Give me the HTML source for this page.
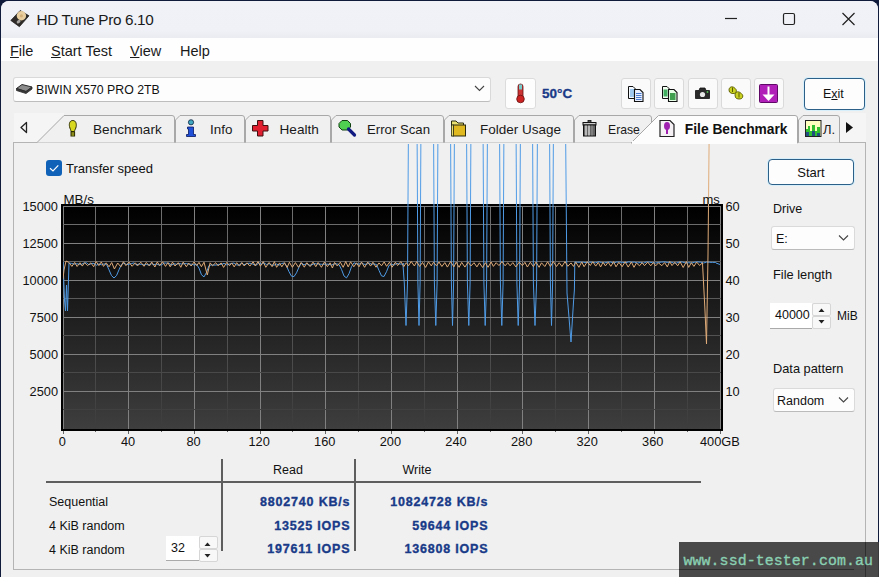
<!DOCTYPE html><html><head><meta charset="utf-8"><style>
html,body{margin:0;padding:0;width:879px;height:577px;overflow:hidden;background:#101a3a;}
.t{position:absolute;white-space:nowrap;font-family:"Liberation Sans",sans-serif;}
.b{position:absolute;box-sizing:border-box;}
svg{position:absolute;left:0;top:0;}
</style></head><body>
<div class="b" style="left:1px;top:1px;width:877px;height:600px;background:#f0f0f0;border-radius:8px 8px 0 0;overflow:hidden;"></div><div class="b" style="left:1px;top:1px;width:877px;height:37px;background:linear-gradient(#f0f2f8 0px,#f0f1f7 30px,#ebecf1 36px);border-radius:8px 8px 0 0;"></div><div class="b" style="left:1px;top:37.5px;width:877px;height:23.5px;background:#fefefe;"></div><div class="t" style="left:36.5px;top:12.05px;font-size:15.3px;line-height:15.3px;color:#1a1a1a;font-weight:400;font-family:Liberation Sans, sans-serif;letter-spacing:-0.35px;">HD Tune Pro 6.10</div><div class="t" style="left:10px;top:43.73px;font-size:14.5px;line-height:14.5px;color:#1a1a1a;font-weight:400;font-family:Liberation Sans, sans-serif;"><u>F</u>ile</div><div class="t" style="left:51px;top:43.73px;font-size:14.5px;line-height:14.5px;color:#1a1a1a;font-weight:400;font-family:Liberation Sans, sans-serif;"><u>S</u>tart Test</div><div class="t" style="left:130px;top:43.73px;font-size:14.5px;line-height:14.5px;color:#1a1a1a;font-weight:400;font-family:Liberation Sans, sans-serif;"><u>V</u>iew</div><div class="t" style="left:180px;top:43.73px;font-size:14.5px;line-height:14.5px;color:#1a1a1a;font-weight:400;font-family:Liberation Sans, sans-serif;">Help</div><svg width="879" height="40" style="left:0;top:0">
<line x1="725" y1="18.5" x2="737" y2="18.5" stroke="#222" stroke-width="1.2"/>
<rect x="783.5" y="13.5" width="11" height="11" rx="1.5" fill="none" stroke="#222" stroke-width="1.2"/>
<path d="M842.5 13 L854.5 25 M854.5 13 L842.5 25" stroke="#222" stroke-width="1.2"/>
</svg><div class="b" style="left:13px;top:77px;width:478px;height:25px;background:#fdfdfd;border:1px solid #d9d9d9;border-bottom-color:#bdbdbd;border-radius:3px;"></div><div class="t" style="left:36px;top:83.59px;font-size:12.3px;line-height:12.3px;color:#111;font-weight:400;font-family:Liberation Sans, sans-serif;">BIWIN X570 PRO 2TB</div><svg width="879" height="120" style="left:0;top:0">
<path d="M16.5 88.5 L22 84.5 L32 87 L26 91.5 Z" fill="#8a8a8a" stroke="#2a2a2a" stroke-width="1"/>
<path d="M16.5 88.5 V90.5 L26 93.5 L32 89 V87 L26 91.5 Z" fill="#3a3a3a" stroke="#2a2a2a" stroke-width="0.8"/>
<path d="M475 86 L479.5 90.5 L484 86" fill="none" stroke="#444" stroke-width="1.1"/>
</svg><div class="b" style="left:505px;top:78px;width:31px;height:31px;background:#fdfdfd;border:1px solid #dcdcdc;border-radius:3px;"></div><svg width="879" height="120" style="left:0;top:0">
<rect x="518" y="84" width="5" height="14" rx="2.5" fill="#c33" stroke="#611" stroke-width="0.8"/>
<rect x="519" y="84.5" width="3" height="5" fill="#7cc"/>
<circle cx="520.5" cy="99" r="3.8" fill="#c22" stroke="#611" stroke-width="0.8"/>
</svg><div class="t" style="left:542px;top:87.07px;font-size:13.5px;line-height:13.5px;color:#1a3a88;font-weight:700;font-family:Liberation Sans, sans-serif;-webkit-text-stroke:0.3px #1a3a88;">50°C</div><div class="b" style="left:621px;top:78px;width:30px;height:31px;background:#fafafa;border:1px solid #dadada;border-radius:3px;"></div><div class="b" style="left:654px;top:78px;width:30px;height:31px;background:#fafafa;border:1px solid #dadada;border-radius:3px;"></div><div class="b" style="left:688px;top:78px;width:30px;height:31px;background:#fafafa;border:1px solid #dadada;border-radius:3px;"></div><div class="b" style="left:721px;top:78px;width:30px;height:31px;background:#fafafa;border:1px solid #dadada;border-radius:3px;"></div><div class="b" style="left:754px;top:78px;width:30px;height:31px;background:#fafafa;border:1px solid #dadada;border-radius:3px;"></div><svg width="879" height="120" style="left:0;top:0">
<path d="M628.5 86.5 H633 L635.5 89 V98.5 H628.5 Z" fill="#f4f8ff" stroke="#111" stroke-width="1"/>
<path d="M630 90h4M630 92h4M630 94h4M630 96h4" stroke="#4a9ae0" stroke-width="1"/>
<path d="M634.5 89.5 H640 L643 92.5 V101.5 H634.5 Z" fill="#e8f0ff" stroke="#111" stroke-width="1.1"/>
<path d="M636 93.5h5.5M636 95.5h5.5M636 97.5h5.5M636 99.5h5.5" stroke="#4a7ad0" stroke-width="1"/>
<path d="M662.5 86.5 H667 L669.5 89 V98.5 H662.5 Z" fill="#f4fff4" stroke="#111" stroke-width="1"/>
<rect x="663.5" y="89.5" width="4" height="7" fill="#40b060"/>
<path d="M668.5 89.5 H674 L677 92.5 V101.5 H668.5 Z" fill="#e8ffe8" stroke="#111" stroke-width="1.1"/>
<rect x="670" y="93" width="5.5" height="7" fill="#40a050"/>
<path d="M695.5 90.5 H699 L700 88 H705 L706 90.5 H709.5 V98.5 H695.5 Z" fill="#2a2a2a" stroke="#111" stroke-width="0.8"/>
<circle cx="702.5" cy="94.5" r="2.6" fill="#e8e8e8"/>
<circle cx="707.5" cy="92" r="0.9" fill="#50c050"/>
<path d="M729 90 C729 87 732 86 734 87.5 C736 89 737 90 736 92.5 C735 94 731 94 729.5 92 Z" fill="#c8d020" stroke="#5a5a00" stroke-width="0.9"/>
<path d="M735 95 C735 92 738 91 740 92.5 C742 94 743.5 95 742.5 97.5 C741.5 99.5 737 99.5 735.5 97.5 Z" fill="#c8d020" stroke="#5a5a00" stroke-width="0.9"/>
<path d="M732.5 87.5 V92 M739 92.5 V97.5" stroke="#5a5a00" stroke-width="1"/>
<rect x="759.5" y="84.5" width="18" height="18" rx="1" fill="#b020b8" stroke="#600868" stroke-width="1"/>
<path d="M768.5 86.5 V99" stroke="#fff" stroke-width="2"/>
<path d="M762.5 94.5 H774.5 L768.5 101 Z" fill="#fff"/>
</svg><div class="b" style="left:804px;top:78px;width:61px;height:32px;background:#fdfdfd;border:1px solid #2d6088;border-radius:4px;box-shadow:0 0 0 1px #d6effb;"></div><div class="t" style="left:823px;top:87.92px;font-size:12.5px;line-height:12.5px;color:#111;font-weight:400;font-family:Liberation Sans, sans-serif;">E<u>x</u>it</div><div class="b" style="left:13px;top:142px;width:853px;height:428px;background:#f0f0f0;border:1px solid #b4b4b4;"></div><svg width="879" height="150" style="left:0;top:0"><rect x="14" y="113" width="50" height="29" fill="#f5f5f5"/><rect x="840" y="113" width="26" height="29" fill="#f5f5f5"/><path d="M26.5 122.5 L21 127.5 L26.5 132.5 Z" fill="none" stroke="#222" stroke-width="1.3" stroke-linejoin="round"/><path d="M846 122 L853 127.5 L846 133 Z" fill="#111"/><path d="M37 142.5 L64 115.5 H172 Q174.5 115.5 174.5 118 V142.5" fill="#f0f0f0" stroke="#a8a8a8" stroke-width="1"/><path d="M175.5 142.5 V120 L180 115.5 H242 Q244.5 115.5 244.5 118 V142.5" fill="#f0f0f0" stroke="#a8a8a8" stroke-width="1"/><path d="M245.5 142.5 V120 L250 115.5 H328 Q330.5 115.5 330.5 118 V142.5" fill="#f0f0f0" stroke="#a8a8a8" stroke-width="1"/><path d="M331.5 142.5 V120 L336 115.5 H441 Q443.5 115.5 443.5 118 V142.5" fill="#f0f0f0" stroke="#a8a8a8" stroke-width="1"/><path d="M444.5 142.5 V120 L449 115.5 H571 Q573.5 115.5 573.5 118 V142.5" fill="#f0f0f0" stroke="#a8a8a8" stroke-width="1"/><path d="M574.5 142.5 V120 L579 115.5 H649 Q651.5 115.5 651.5 118 V142.5" fill="#f0f0f0" stroke="#a8a8a8" stroke-width="1"/><path d="M798.5 142.5 V120 L803 115.5 H837 Q839.5 115.5 839.5 118 V142.5" fill="#f0f0f0" stroke="#a8a8a8" stroke-width="1"/><path d="M631 143 L658.5 115.5 H795 Q797.5 115.5 797.5 118 V143 Z" fill="#fdfdfd" stroke="#a8a8a8" stroke-width="1"/><rect x="632" y="141" width="165" height="3" fill="#fdfdfd"/></svg><div class="t" style="left:93px;top:122.99px;font-size:13.6px;line-height:13.6px;color:#1a1a1a;font-weight:400;font-family:Liberation Sans, sans-serif;">Benchmark</div><div class="t" style="left:210px;top:123.16px;font-size:13.4px;line-height:13.4px;color:#1a1a1a;font-weight:400;font-family:Liberation Sans, sans-serif;">Info</div><div class="t" style="left:279.5px;top:122.99px;font-size:13.6px;line-height:13.6px;color:#1a1a1a;font-weight:400;font-family:Liberation Sans, sans-serif;">Health</div><div class="t" style="left:367px;top:123.33px;font-size:13.2px;line-height:13.2px;color:#1a1a1a;font-weight:400;font-family:Liberation Sans, sans-serif;">Error Scan</div><div class="t" style="left:480px;top:123.07px;font-size:13.5px;line-height:13.5px;color:#1a1a1a;font-weight:400;font-family:Liberation Sans, sans-serif;">Folder Usage</div><div class="t" style="left:608px;top:124.17px;font-size:12.2px;line-height:12.2px;color:#1a1a1a;font-weight:400;font-family:Liberation Sans, sans-serif;">Erase</div><div class="t" style="left:823px;top:123.00px;font-size:13px;line-height:13px;color:#1a1a1a;font-weight:400;font-family:Liberation Sans, sans-serif;">Л.</div><div class="t" style="left:684.8px;top:122.92px;font-size:13.8px;line-height:13.8px;color:#111;font-weight:700;font-family:Liberation Sans, sans-serif;">File Benchmark</div><svg width="879" height="150" style="left:0;top:0">
<path d="M72.8 120.5 C69.5 120.5 69 124 69.5 126.5 C70 129 71 130 71 131.5 H74.5 C74.5 130 75.8 129 76.2 126.5 C76.6 124 76 120.5 72.8 120.5 Z" fill="#d8d820" stroke="#2a2a00" stroke-width="1"/>
<rect x="71" y="132" width="3.6" height="4" fill="#d0d030" stroke="#2a2a00" stroke-width="1"/>
<path d="M71 134 H74.6" stroke="#2a2a00" stroke-width="0.8"/>
<circle cx="191" cy="122.3" r="2.6" fill="#40a8c0" stroke="#0a2040" stroke-width="0.8"/>
<path d="M187.5 127 H193.5 V134.5 H195.5 V136.5 H186.5 V134.5 H188.5 V129 H187.5 Z" fill="#2050d8" stroke="#081860" stroke-width="0.8"/>
<path d="M257.5 120.5 H263 V125.5 H268 V131 H263 V136 H257.5 V131 H252.5 V125.5 H257.5 Z" fill="#e02030" stroke="#401010" stroke-width="1"/>
<path d="M342 120.5 H347.5 L350.5 123.5 V127 L347.5 130 H342 L339 127 V123.5 Z" fill="#50d050" stroke="#104010" stroke-width="1"/>
<path d="M348.5 129 L354.5 135" stroke="#101a80" stroke-width="3.2" stroke-linecap="round"/>
<path d="M451.5 121 H456 L458 123 H463.5 V126 H451.5 Z" fill="#e8e070" stroke="#2a2a10" stroke-width="1"/>
<rect x="453" y="125" width="12.5" height="11" fill="#e0b820" stroke="#2a2a10" stroke-width="1"/>
<rect x="451.5" y="125" width="2" height="11" fill="#e8e070" stroke="#2a2a10" stroke-width="0.8"/>
<rect x="583" y="122.5" width="13" height="2.5" fill="#ccc" stroke="#111" stroke-width="1"/>
<rect x="588" y="120.5" width="3" height="2" fill="#555" stroke="#111" stroke-width="0.8"/>
<rect x="583.5" y="125" width="12" height="11" fill="#666" stroke="#111" stroke-width="1"/>
<path d="M586 125.5 V135.5 M589 125.5 V135.5" stroke="#eee" stroke-width="1.2"/>
<path d="M592 125.5 V135.5" stroke="#999" stroke-width="1"/>
<path d="M660 120.5 H670 L674 124.5 V136.5 H660 Z" fill="#f4f0f4" stroke="#222" stroke-width="1.2"/>
<ellipse cx="667" cy="126" rx="3" ry="4" fill="#a020b0"/>
<path d="M667 129 V134" stroke="#a020b0" stroke-width="2"/>
<rect x="805.5" y="120.5" width="15.5" height="16" fill="#ffffc0" stroke="#222" stroke-width="1"/>
<path d="M806 136 V129 H808 V126 H810 V131 H812 V125 H815 V131 H817 V127 H820 V136 Z" fill="#30c030"/>
<path d="M806 136 V132 H809 V136 M812 136 V131 H815 V136 M817 136 V133 H820 V136" fill="#205080"/>
</svg><svg width="879" height="40" style="left:0;top:0">
<path d="M10.8 20.4 L20.2 10.5 L29 15.8 L19.4 26.7 Z" fill="#2e2b28" stroke="#1a1816" stroke-width="0.7" stroke-linejoin="round"/>
<circle cx="21.4" cy="15.8" r="4.7" fill="#e9cf9f"/>
<circle cx="21.4" cy="15.8" r="1.6" fill="#d4b078"/>
<ellipse cx="18.6" cy="21.6" rx="2.2" ry="1.5" fill="#a8a4a0" transform="rotate(-40 18.6 21.6)"/>
</svg><div class="b" style="left:46px;top:160px;width:16px;height:16px;background:#0f62b8;border-radius:3px;"></div><svg width="879" height="200" style="left:0;top:0"><path d="M50 168.3 L53 171 L58.3 165.3" fill="none" stroke="#fff" stroke-width="1.15"/></svg><div class="t" style="left:66px;top:161.50px;font-size:13px;line-height:13px;color:#111;font-weight:400;font-family:Liberation Sans, sans-serif;">Transfer speed</div><svg width="879" height="577" style="left:0;top:0"><defs><linearGradient id="bg" x1="0" y1="0" x2="0" y2="1"><stop offset="0" stop-color="#000"/><stop offset="1" stop-color="#3e3e3e"/></linearGradient><linearGradient id="mg" x1="0" y1="0" x2="0" y2="1"><stop offset="0" stop-color="#707070"/><stop offset="1" stop-color="#3c3c3c"/></linearGradient><clipPath id="cl"><rect x="63" y="144" width="658" height="285"/></clipPath></defs><rect x="61" y="204" width="662" height="227" fill="#000"/><rect x="63" y="206" width="658" height="223" fill="url(#bg)"/><rect x="63.0" y="206" width="1" height="223" fill="#808080"/><rect x="95.0" y="206" width="1" height="223" fill="url(#mg)"/><rect x="128.0" y="206" width="1" height="223" fill="#808080"/><rect x="161.0" y="206" width="1" height="223" fill="url(#mg)"/><rect x="194.0" y="206" width="1" height="223" fill="#808080"/><rect x="227.0" y="206" width="1" height="223" fill="url(#mg)"/><rect x="260.0" y="206" width="1" height="223" fill="#808080"/><rect x="292.0" y="206" width="1" height="223" fill="url(#mg)"/><rect x="325.0" y="206" width="1" height="223" fill="#808080"/><rect x="358.0" y="206" width="1" height="223" fill="url(#mg)"/><rect x="391.0" y="206" width="1" height="223" fill="#808080"/><rect x="424.0" y="206" width="1" height="223" fill="url(#mg)"/><rect x="457.0" y="206" width="1" height="223" fill="#808080"/><rect x="490.0" y="206" width="1" height="223" fill="url(#mg)"/><rect x="522.0" y="206" width="1" height="223" fill="#808080"/><rect x="555.0" y="206" width="1" height="223" fill="url(#mg)"/><rect x="588.0" y="206" width="1" height="223" fill="#808080"/><rect x="621.0" y="206" width="1" height="223" fill="url(#mg)"/><rect x="654.0" y="206" width="1" height="223" fill="#808080"/><rect x="687.0" y="206" width="1" height="223" fill="url(#mg)"/><rect x="720.0" y="206" width="1" height="223" fill="#808080"/><line x1="63" y1="206.5" x2="721" y2="206.5" stroke="#808080" stroke-width="1"/><line x1="63" y1="224.5" x2="721" y2="224.5" stroke="#6c6c6c" stroke-width="1"/><line x1="63" y1="243.5" x2="721" y2="243.5" stroke="#808080" stroke-width="1"/><line x1="63" y1="261.5" x2="721" y2="261.5" stroke="#636363" stroke-width="1"/><line x1="63" y1="280.5" x2="721" y2="280.5" stroke="#808080" stroke-width="1"/><line x1="63" y1="298.5" x2="721" y2="298.5" stroke="#5a5a5a" stroke-width="1"/><line x1="63" y1="317.5" x2="721" y2="317.5" stroke="#808080" stroke-width="1"/><line x1="63" y1="335.5" x2="721" y2="335.5" stroke="#525252" stroke-width="1"/><line x1="63" y1="354.5" x2="721" y2="354.5" stroke="#808080" stroke-width="1"/><line x1="63" y1="372.5" x2="721" y2="372.5" stroke="#494949" stroke-width="1"/><line x1="63" y1="391.5" x2="721" y2="391.5" stroke="#808080" stroke-width="1"/><line x1="63" y1="409.5" x2="721" y2="409.5" stroke="#404040" stroke-width="1"/><rect x="61" y="204" width="2" height="227" fill="#000"/><rect x="61" y="204" width="662" height="2" fill="#000"/><rect x="61" y="429" width="661" height="2" fill="#000"/><rect x="721" y="204" width="1" height="227" fill="#000"/><line x1="63.5" y1="431" x2="63.5" y2="434" stroke="#666" stroke-width="1"/><line x1="95.5" y1="431" x2="95.5" y2="432" stroke="#666" stroke-width="1"/><line x1="128.5" y1="431" x2="128.5" y2="434" stroke="#666" stroke-width="1"/><line x1="161.5" y1="431" x2="161.5" y2="432" stroke="#666" stroke-width="1"/><line x1="194.5" y1="431" x2="194.5" y2="434" stroke="#666" stroke-width="1"/><line x1="227.5" y1="431" x2="227.5" y2="432" stroke="#666" stroke-width="1"/><line x1="260.5" y1="431" x2="260.5" y2="434" stroke="#666" stroke-width="1"/><line x1="292.5" y1="431" x2="292.5" y2="432" stroke="#666" stroke-width="1"/><line x1="325.5" y1="431" x2="325.5" y2="434" stroke="#666" stroke-width="1"/><line x1="358.5" y1="431" x2="358.5" y2="432" stroke="#666" stroke-width="1"/><line x1="391.5" y1="431" x2="391.5" y2="434" stroke="#666" stroke-width="1"/><line x1="424.5" y1="431" x2="424.5" y2="432" stroke="#666" stroke-width="1"/><line x1="457.5" y1="431" x2="457.5" y2="434" stroke="#666" stroke-width="1"/><line x1="490.5" y1="431" x2="490.5" y2="432" stroke="#666" stroke-width="1"/><line x1="522.5" y1="431" x2="522.5" y2="434" stroke="#666" stroke-width="1"/><line x1="555.5" y1="431" x2="555.5" y2="432" stroke="#666" stroke-width="1"/><line x1="588.5" y1="431" x2="588.5" y2="434" stroke="#666" stroke-width="1"/><line x1="621.5" y1="431" x2="621.5" y2="432" stroke="#666" stroke-width="1"/><line x1="654.5" y1="431" x2="654.5" y2="434" stroke="#666" stroke-width="1"/><line x1="687.5" y1="431" x2="687.5" y2="432" stroke="#666" stroke-width="1"/><line x1="720.5" y1="431" x2="720.5" y2="434" stroke="#666" stroke-width="1"/><g clip-path="url(#cl)"><polyline fill="none" stroke="#4f9be6" stroke-width="1" points="63.0,262.0 64.5,300.0 65.5,311.0 66.5,285.0 67.5,311.0 69.0,263.0 71.5,263.4 74.0,264.1 76.5,263.7 79.0,264.2 81.5,264.3 84.0,263.0 86.5,262.8 89.0,264.8 91.5,263.4 94.0,263.4 96.5,265.2 99.0,263.9 101.5,264.8 104.0,263.9 106.5,264.4 109.0,269.8 111.5,275.6 114.0,278.0 116.5,275.6 119.0,269.8 121.5,264.4 124.0,263.0 126.5,264.6 129.0,264.2 131.5,263.5 134.0,262.9 136.5,264.9 139.0,263.9 141.5,264.5 144.0,264.9 146.5,264.5 149.0,265.0 151.5,263.7 154.0,264.7 156.5,263.9 159.0,265.0 161.5,264.9 164.0,263.0 166.5,263.1 169.0,263.3 171.5,265.1 174.0,263.8 176.5,264.3 179.0,263.5 181.5,264.0 184.0,263.7 186.5,263.6 189.0,264.2 191.5,264.2 194.0,265.0 196.5,264.4 199.0,268.1 201.5,274.8 204.0,276.9 206.5,272.4 209.0,265.5 211.5,264.9 214.0,265.1 216.5,265.0 219.0,264.2 221.5,264.5 224.0,263.3 226.5,264.8 229.0,264.2 231.5,263.5 234.0,263.0 236.5,264.8 239.0,265.2 241.5,263.0 244.0,264.7 246.5,263.8 249.0,263.2 251.5,263.5 254.0,264.6 256.5,264.9 259.0,262.9 261.5,264.3 264.0,262.9 266.5,264.5 269.0,263.6 271.5,264.9 274.0,265.2 276.5,264.0 279.0,265.2 281.5,263.5 284.0,263.0 286.5,266.0 289.0,271.7 291.5,276.2 294.0,276.6 296.5,272.8 299.0,267.1 301.5,262.9 304.0,264.9 306.5,263.6 309.0,265.1 311.5,265.0 314.0,263.7 316.5,263.9 319.0,264.0 321.5,264.3 324.0,264.2 326.5,264.1 329.0,264.3 331.5,265.1 334.0,264.0 336.5,263.8 339.0,264.5 341.5,269.4 344.0,276.0 346.5,277.9 349.0,273.7 351.5,266.7 354.0,262.8 356.5,263.8 359.0,264.2 361.5,262.8 364.0,264.3 366.5,264.3 369.0,262.9 371.5,264.3 374.0,263.9 376.5,264.5 379.0,270.4 381.5,275.9 384.0,276.5 386.5,271.7 389.0,265.4 391.5,264.4 394.0,265.1 396.5,263.4 399.0,263.9 401.5,264.2 404.0,263.6 403.0,265.0 404.3,283.0 406.0,325.5 407.5,283.0 408.5,120.0 417.0,120.0 417.9,283.0 419.0,325.5 420.1,283.0 421.0,120.0 433.5,120.0 434.4,283.0 435.8,325.5 437.1,283.0 438.0,120.0 450.5,120.0 451.4,283.0 452.5,325.5 453.6,283.0 454.5,120.0 466.5,120.0 467.4,283.0 468.8,325.5 470.1,283.0 471.0,120.0 483.0,120.0 483.9,283.0 485.2,325.5 486.6,283.0 487.5,120.0 499.5,120.0 500.4,283.0 501.8,325.5 503.1,283.0 504.0,120.0 516.0,120.0 516.9,283.0 518.2,325.5 519.6,283.0 520.5,120.0 532.5,120.0 533.4,283.0 535.0,325.5 536.6,283.0 537.5,120.0 549.5,120.0 550.4,283.0 551.5,325.5 552.6,283.0 553.5,120.0 565.5,120.0 567.0,293.0 571.0,342.0 573.5,302.0 574.4,290.0 574.8,262.0 577.6,262.3 580.6,262.2 583.6,262.3 586.6,262.7 589.6,262.2 592.6,262.3 595.6,262.9 598.6,261.7 601.6,262.6 604.6,262.9 607.6,262.2 610.6,262.1 613.6,263.0 616.6,262.1 619.6,262.0 622.6,262.4 625.6,262.8 628.6,261.9 631.6,262.2 634.6,262.2 637.6,263.0 640.6,262.4 643.6,263.1 646.6,262.0 649.6,262.2 652.6,262.7 655.6,263.1 658.6,262.4 661.6,262.1 664.6,261.9 667.6,262.5 670.6,262.0 673.6,263.0 676.6,263.0 679.6,262.0 682.6,262.1 685.6,263.0 688.6,262.7 691.6,263.0 694.6,262.3 697.6,261.9 700.6,262.2 703.6,263.0 706.6,262.1 709.6,262.3 712.6,262.4 715.6,262.4 716.0,263.0 720.0,264.5"/><polyline fill="none" stroke="#dfab78" stroke-width="1" points="63.0,279.0 64.0,270.0 66.0,261.0 68.7,262.3 71.9,266.4 74.7,262.4 77.1,266.5 80.0,262.7 82.3,266.1 84.6,262.7 87.5,265.6 90.8,262.9 93.7,266.7 96.1,261.5 98.9,265.6 101.3,261.9 103.5,266.4 106.2,262.8 109.0,266.8 111.7,262.5 114.4,269.0 117.7,263.0 120.9,266.9 123.4,261.8 125.9,265.6 129.0,262.1 132.1,266.3 135.4,262.8 137.6,265.9 140.8,262.2 144.0,266.3 146.3,262.4 149.4,266.0 151.7,262.0 154.9,267.0 157.3,261.9 159.6,265.6 162.6,261.8 165.5,266.4 167.9,262.6 170.2,266.8 172.5,262.1 175.0,266.0 178.2,262.7 180.8,267.3 183.2,262.1 186.4,266.8 188.7,263.0 191.1,266.0 194.1,262.0 196.7,265.6 199.0,262.4 201.4,266.7 204.0,262.2 207.3,275.0 210.1,262.8 212.5,265.8 215.7,262.7 218.2,265.9 221.2,262.9 223.6,267.4 226.8,262.4 229.5,265.7 231.7,262.9 234.2,266.9 236.7,262.7 239.5,266.1 241.9,262.6 244.2,266.0 247.0,262.8 249.9,266.1 253.1,261.8 255.3,266.0 258.0,261.6 260.4,266.2 263.2,261.7 265.8,267.3 269.1,262.5 272.1,266.7 274.4,261.6 276.6,267.3 279.6,262.9 281.8,266.8 284.6,262.6 287.1,267.5 289.4,262.3 292.4,267.3 295.4,262.6 298.5,267.3 301.1,262.5 304.3,267.2 306.9,262.7 310.1,266.6 313.0,262.1 315.8,266.7 318.1,262.5 321.4,267.3 324.4,262.1 327.4,266.7 330.1,262.8 332.4,268.0 334.6,262.4 337.3,266.0 340.3,262.2 343.2,267.3 345.7,261.5 348.2,266.9 350.6,261.8 353.8,266.8 356.5,262.8 359.0,266.8 361.5,262.1 364.6,267.3 367.7,262.1 370.6,266.1 372.9,262.2 376.0,267.2 379.0,262.9 381.5,265.8 384.2,261.9 386.6,266.3 389.5,262.2 392.1,267.2 395.4,262.2 397.6,265.6 400.8,261.6 403.8,266.6 406.3,262.7 408.5,265.8 411.2,261.5 414.4,266.0 416.7,261.6 419.6,266.4 422.5,262.5 425.6,267.4 428.5,261.8 431.3,265.9 433.5,262.2 436.5,265.9 439.0,262.0 441.9,266.5 444.8,262.6 447.4,267.1 450.6,261.6 453.9,266.9 456.2,262.2 459.1,267.3 461.7,262.4 464.9,267.1 468.1,262.2 471.0,265.9 474.0,262.7 476.9,266.9 479.4,262.8 482.6,267.5 485.4,262.7 488.0,267.3 491.1,262.0 493.4,266.4 496.2,262.7 499.0,265.6 502.0,261.6 505.1,265.8 507.7,262.7 510.1,265.8 512.8,262.6 515.9,266.9 519.2,262.2 522.4,265.7 524.9,262.3 527.4,267.0 530.3,262.3 533.4,266.6 536.0,262.1 539.1,267.3 541.5,262.8 544.8,266.5 547.6,261.8 550.4,266.5 553.3,261.5 556.5,266.5 559.2,262.7 562.0,266.5 565.0,261.6 567.8,266.3 571.0,262.9 573.5,266.4 575.8,262.2 578.9,267.3 581.7,262.0 584.1,266.7 587.3,261.7 590.3,265.5 592.8,261.8 595.7,266.1 598.3,262.4 600.6,267.0 603.0,262.3 605.4,265.9 608.2,262.2 610.8,266.3 613.6,261.7 616.0,266.8 618.9,262.3 622.1,266.7 625.2,261.8 628.2,267.1 631.4,262.0 634.0,267.3 636.4,263.0 639.6,265.8 642.1,262.6 644.5,265.7 647.7,262.1 650.7,265.8 653.4,262.5 655.6,265.9 658.5,262.9 661.8,265.7 664.6,262.6 667.3,266.9 669.7,261.6 672.0,265.6 674.8,262.3 677.7,265.8 680.1,261.8 683.2,267.5 686.4,261.6 688.7,267.4 691.4,262.6 693.9,266.4 696.7,262.1 699.6,265.5 702.5,262.8 702.5,263.0 704.8,307.0 706.5,344.0 708.0,255.0 709.3,120.0"/></g></svg><div class="t" style="right:821px;top:200.66px;font-size:12.8px;line-height:12.8px;color:#111;font-weight:400;">15000</div><div class="t" style="right:821px;top:237.66px;font-size:12.8px;line-height:12.8px;color:#111;font-weight:400;">12500</div><div class="t" style="right:821px;top:274.66px;font-size:12.8px;line-height:12.8px;color:#111;font-weight:400;">10000</div><div class="t" style="right:821px;top:311.66px;font-size:12.8px;line-height:12.8px;color:#111;font-weight:400;">7500</div><div class="t" style="right:821px;top:348.66px;font-size:12.8px;line-height:12.8px;color:#111;font-weight:400;">5000</div><div class="t" style="right:821px;top:385.66px;font-size:12.8px;line-height:12.8px;color:#111;font-weight:400;">2500</div><div class="t" style="left:725.5px;top:200.66px;font-size:12.8px;line-height:12.8px;color:#111;font-weight:400;font-family:Liberation Sans, sans-serif;">60</div><div class="t" style="left:725.5px;top:237.66px;font-size:12.8px;line-height:12.8px;color:#111;font-weight:400;font-family:Liberation Sans, sans-serif;">50</div><div class="t" style="left:725.5px;top:274.66px;font-size:12.8px;line-height:12.8px;color:#111;font-weight:400;font-family:Liberation Sans, sans-serif;">40</div><div class="t" style="left:725.5px;top:311.66px;font-size:12.8px;line-height:12.8px;color:#111;font-weight:400;font-family:Liberation Sans, sans-serif;">30</div><div class="t" style="left:725.5px;top:348.66px;font-size:12.8px;line-height:12.8px;color:#111;font-weight:400;font-family:Liberation Sans, sans-serif;">20</div><div class="t" style="left:725.5px;top:385.66px;font-size:12.8px;line-height:12.8px;color:#111;font-weight:400;font-family:Liberation Sans, sans-serif;">10</div><div class="t" style="left:63.5px;top:192.74px;font-size:13.3px;line-height:13.3px;color:#111;font-weight:400;font-family:Liberation Sans, sans-serif;">MB/s</div><div class="t" style="left:702.5px;top:193.00px;font-size:13px;line-height:13px;color:#111;font-weight:400;font-family:Liberation Sans, sans-serif;">ms</div><div class="t" style="left:-37.6px;width:200px;text-align:center;top:436.16px;font-size:12.8px;line-height:12.8px;color:#111;font-weight:400;">0</div><div class="t" style="left:28.0px;width:200px;text-align:center;top:436.16px;font-size:12.8px;line-height:12.8px;color:#111;font-weight:400;">40</div><div class="t" style="left:93.6px;width:200px;text-align:center;top:436.16px;font-size:12.8px;line-height:12.8px;color:#111;font-weight:400;">80</div><div class="t" style="left:159.2px;width:200px;text-align:center;top:436.16px;font-size:12.8px;line-height:12.8px;color:#111;font-weight:400;">120</div><div class="t" style="left:224.79999999999995px;width:200px;text-align:center;top:436.16px;font-size:12.8px;line-height:12.8px;color:#111;font-weight:400;">160</div><div class="t" style="left:290.4px;width:200px;text-align:center;top:436.16px;font-size:12.8px;line-height:12.8px;color:#111;font-weight:400;">200</div><div class="t" style="left:355.99999999999994px;width:200px;text-align:center;top:436.16px;font-size:12.8px;line-height:12.8px;color:#111;font-weight:400;">240</div><div class="t" style="left:421.5999999999999px;width:200px;text-align:center;top:436.16px;font-size:12.8px;line-height:12.8px;color:#111;font-weight:400;">280</div><div class="t" style="left:487.19999999999993px;width:200px;text-align:center;top:436.16px;font-size:12.8px;line-height:12.8px;color:#111;font-weight:400;">320</div><div class="t" style="left:552.8px;width:200px;text-align:center;top:436.16px;font-size:12.8px;line-height:12.8px;color:#111;font-weight:400;">360</div><div class="t" style="left:700px;top:436.16px;font-size:12.8px;line-height:12.8px;color:#111;font-weight:400;font-family:Liberation Sans, sans-serif;">400GB</div><div class="b" style="left:768px;top:159px;width:86px;height:26px;background:#fdfdfd;border:1px solid #2d6088;border-radius:4px;box-shadow:0 0 0 1px #d6effb;"></div><div class="t" style="left:711px;width:200px;text-align:center;top:166.00px;font-size:13px;line-height:13px;color:#111;font-weight:400;">Start</div><div class="t" style="left:773px;top:203.42px;font-size:12.5px;line-height:12.5px;color:#111;font-weight:400;font-family:Liberation Sans, sans-serif;">Drive</div><div class="b" style="left:771px;top:226px;width:84px;height:24px;background:#fdfdfd;border:1px solid #dadada;border-bottom-color:#bbb;border-radius:3px;"></div><div class="t" style="left:776px;top:233.42px;font-size:12.5px;line-height:12.5px;color:#111;font-weight:400;font-family:Liberation Sans, sans-serif;">E:</div><div class="t" style="left:773px;top:269.16px;font-size:12.8px;line-height:12.8px;color:#111;font-weight:400;font-family:Liberation Sans, sans-serif;">File length</div><div class="b" style="left:770px;top:303px;width:42px;height:26px;background:#fff;border-bottom:1px solid #aaa;"></div><div class="t" style="left:775px;top:309.42px;font-size:12.5px;line-height:12.5px;color:#111;font-weight:400;font-family:Liberation Sans, sans-serif;">40000</div><div class="b" style="left:812px;top:303px;width:19px;height:13px;background:#f8f8f8;border:1px solid #d6d6d6;border-radius:2px;"></div><div class="b" style="left:812px;top:316px;width:19px;height:13px;background:#f8f8f8;border:1px solid #d6d6d6;border-radius:2px;"></div><div class="t" style="left:837px;top:309.84px;font-size:12px;line-height:12px;color:#111;font-weight:400;font-family:Liberation Sans, sans-serif;">MiB</div><div class="t" style="left:773px;top:363.16px;font-size:12.8px;line-height:12.8px;color:#111;font-weight:400;font-family:Liberation Sans, sans-serif;">Data pattern</div><div class="b" style="left:773px;top:388px;width:82px;height:24px;background:#fdfdfd;border:1px solid #dadada;border-bottom-color:#bbb;border-radius:3px;"></div><div class="t" style="left:777px;top:395.42px;font-size:12.5px;line-height:12.5px;color:#111;font-weight:400;font-family:Liberation Sans, sans-serif;">Random</div><svg width="879" height="577" style="left:0;top:0"><path d="M839 235.5 L843.5 240 L848 235.5" fill="none" stroke="#444" stroke-width="1.1"/><path d="M839 397.5 L843.5 402 L848 397.5" fill="none" stroke="#444" stroke-width="1.1"/><path d="M818.5 312 L821.5 308.5 L824.5 312 Z" fill="#222"/><path d="M818.5 320 L821.5 323.5 L824.5 320 Z" fill="#222"/><path d="M204.5 546 L207.5 542.5 L210.5 546 Z" fill="#222"/><path d="M204.5 554 L207.5 557.5 L210.5 554 Z" fill="#222"/></svg><div class="b" style="left:46px;top:481px;width:655px;height:2px;background:#5e5e5e;"></div><div class="b" style="left:221px;top:459px;width:2px;height:92px;background:#5e5e5e;"></div><div class="b" style="left:354px;top:459px;width:2px;height:92px;background:#5e5e5e;"></div><div class="t" style="left:188px;width:200px;text-align:center;top:464.42px;font-size:12.5px;line-height:12.5px;color:#111;font-weight:400;">Read</div><div class="t" style="left:317px;width:200px;text-align:center;top:464.42px;font-size:12.5px;line-height:12.5px;color:#111;font-weight:400;">Write</div><div class="t" style="left:49px;top:496.42px;font-size:12.5px;line-height:12.5px;color:#111;font-weight:400;font-family:Liberation Sans, sans-serif;">Sequential</div><div class="t" style="left:49px;top:520.42px;font-size:12.5px;line-height:12.5px;color:#111;font-weight:400;font-family:Liberation Sans, sans-serif;">4 KiB random</div><div class="t" style="left:49px;top:544.42px;font-size:12.5px;line-height:12.5px;color:#111;font-weight:400;font-family:Liberation Sans, sans-serif;">4 KiB random</div><div class="t" style="right:528.7px;top:496.42px;font-size:12.5px;line-height:12.5px;color:#000;font-weight:700;color:#183a88;letter-spacing:0.8px;-webkit-text-stroke:0.35px #183a88;">8802740 KB/s</div><div class="t" style="right:390.7px;top:496.42px;font-size:12.5px;line-height:12.5px;color:#000;font-weight:700;color:#183a88;letter-spacing:0.8px;-webkit-text-stroke:0.35px #183a88;">10824728 KB/s</div><div class="t" style="right:528.7px;top:520.42px;font-size:12.5px;line-height:12.5px;color:#000;font-weight:700;color:#183a88;letter-spacing:0.8px;-webkit-text-stroke:0.35px #183a88;">13525 IOPS</div><div class="t" style="right:390.7px;top:520.42px;font-size:12.5px;line-height:12.5px;color:#000;font-weight:700;color:#183a88;letter-spacing:0.8px;-webkit-text-stroke:0.35px #183a88;">59644 IOPS</div><div class="t" style="right:528.7px;top:543.42px;font-size:12.5px;line-height:12.5px;color:#000;font-weight:700;color:#183a88;letter-spacing:0.8px;-webkit-text-stroke:0.35px #183a88;">197611 IOPS</div><div class="t" style="right:390.7px;top:543.42px;font-size:12.5px;line-height:12.5px;color:#000;font-weight:700;color:#183a88;letter-spacing:0.8px;-webkit-text-stroke:0.35px #183a88;">136808 IOPS</div><div class="b" style="left:166px;top:536px;width:33px;height:25px;background:#fff;border-bottom:1px solid #aaa;"></div><div class="t" style="left:171px;top:542.42px;font-size:12.5px;line-height:12.5px;color:#111;font-weight:400;font-family:Liberation Sans, sans-serif;">32</div><div class="b" style="left:199px;top:536px;width:19px;height:13px;background:#f8f8f8;border:1px solid #d6d6d6;border-radius:2px;"></div><div class="b" style="left:199px;top:549px;width:19px;height:13px;background:#f8f8f8;border:1px solid #d6d6d6;border-radius:2px;"></div><svg width="879" height="577" style="left:0;top:0"><path d="M204.5 546 L207.5 542.5 L210.5 546 Z" fill="#222"/><path d="M204.5 554 L207.5 557.5 L210.5 554 Z" fill="#222"/></svg><div class="b" style="left:679px;top:542px;width:200px;height:35px;background:rgba(60,60,60,0.93);"></div><div class="b" style="left:679px;top:569px;width:175px;height:1px;background:#2e2e2e;"></div><div class="b" style="left:865px;top:542px;width:1px;height:35px;background:#2e2e2e;"></div><div class="t" style="left:683.5px;top:553.89px;font-size:14.9px;line-height:14.9px;color:#8ad0b2;font-weight:400;font-family:Liberation Mono, monospace;letter-spacing:0.09px;-webkit-text-stroke:0.35px #8ad0b2;">www.ssd-tester.com.au</div></body></html>
